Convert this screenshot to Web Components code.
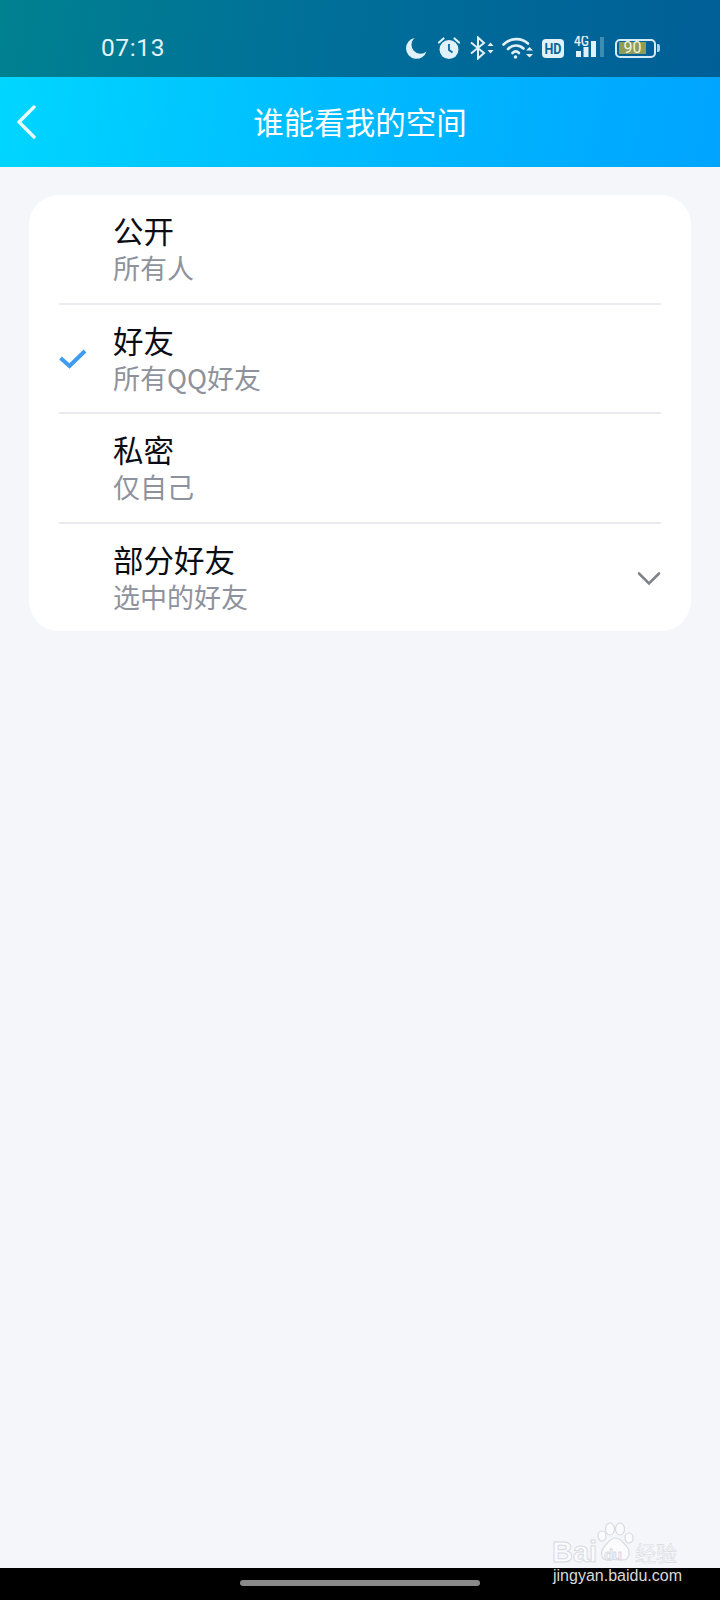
<!DOCTYPE html>
<html lang="zh">
<head>
<meta charset="utf-8">
<title>谁能看我的空间</title>
<style>
	html, body { margin: 0; padding: 0; }
	body {
		width: 720px;
		height: 1600px;
		position: relative;
		overflow: hidden;
		display: flex;
		flex-direction: column;
		background: #f4f6fa;
		font-family: Roboto, "Noto Sans CJK SC", sans-serif;
	}
</style>
</head>
<body>
<status-bar time="07:13" battery="90"></status-bar>
<app-header>谁能看我的空间</app-header>
<option-card>
	<option-row label="公开" hint="所有人"></option-row>
	<option-row label="好友" hint="所有QQ好友" checked></option-row>
	<option-row label="私密" hint="仅自己"></option-row>
	<option-row label="部分好友" hint="选中的好友" expandable></option-row>
</option-card>
<nav-bar></nav-bar>
<baidu-mark></baidu-mark>
<script>
class StatusBar extends HTMLElement {
	constructor() {
		super();
		this.attachShadow({ mode: 'open' });
		this.shadowRoot.innerHTML = `
		<style>
		:host {
			display: flex;
			flex: none;
			height: 77px;
			align-items: center;
			padding: 19px 60px 0 101px;
			box-sizing: border-box;
			background: linear-gradient(100deg, #008190 0%, #006f99 45%, #005f97 100%);
			color: #e4f3fa;
		}
		.time { font-size: 24.5px; line-height: 1; letter-spacing: .6px; }
		.icons { margin-left: auto; display: flex; align-items: center; }
		svg { display: block; flex: none; }
		.battery {
			display: flex;
			align-items: center;
			margin-left: 11px;
		}
		.shell {
			width: 41px;
			height: 19px;
			box-sizing: border-box;
			border: 2px solid #d6ecf6;
			border-radius: 5px;
			padding: 1.5px;
			display: flex;
		}
		.level {
			width: 82%;
			flex: none;
			background: #8f9b57;
			font-size: 16px;
			line-height: 12px;
			text-align: center;
			color: #eef3df;
		}
		.tip { width: 3px; height: 8px; background: #a9d3e6; border-radius: 0 2px 2px 0; margin-left: 1px; }
		</style>
		<span class="time">${this.getAttribute('time')}</span>
		<div class="icons">
			<svg width="22" height="22" viewBox="0 0 22 22" fill="#e1f1f9"><path d="M9.500 1A10.500 10.500 0 1 0 21.500 14.500 9 9 0 0 1 9.500 1Z"/></svg>
			<svg style="margin-left:10px" width="24" height="24" viewBox="0 0 24 24"><circle cx="12" cy="13.500" r="9.500" fill="#e1f1f9"/><path d="M12 8v6l3.500 2.500" fill="none" stroke="#0a6b97" stroke-width="1.800"/><path d="M2 6.500 6.500 2.500M22 6.500 17.500 2.500" stroke="#e1f1f9" stroke-width="2.200" stroke-linecap="round"/></svg>
			<svg style="margin-left:8px" width="26" height="24" viewBox="0 0 26 24" fill="none" stroke="#e1f1f9" stroke-width="2"><path d="M2 6.500 15 17 9 22.500V1.500L15 7 2 17.500"/><path d="M18.500 10l3-3.500 3 3.500zM18.500 14l3 3.500 3-3.500z" fill="#e1f1f9" stroke="none"/></svg>
			<svg style="margin-left:7px" width="32" height="24" viewBox="0 0 32 24" fill="none" stroke="#e1f1f9" stroke-width="2.600" stroke-linecap="round"><path d="M1.500 8.500C8.500 1.500 19.500 1.500 26 7.500"/><path d="M6 13c4.500-4.500 11-4.500 15.500-.5"/><path d="M10.500 17c2-2 4.500-2 6.500 0"/><circle cx="13.500" cy="21" r="1.800" fill="#e1f1f9" stroke="none"/><path d="M24 14.500l3.500-3.500 3.500 3.500zM24 18l3.500 3.500L31 18z" fill="#e1f1f9" stroke="none"/></svg>
			<svg style="margin-left:8px" width="22" height="19" viewBox="0 0 22 19"><rect width="22" height="19" rx="4" fill="#e1f1f9"/><text x="11" y="14.500" text-anchor="middle" font-family="Roboto, sans-serif" font-weight="700" font-size="14" textLength="17" lengthAdjust="spacingAndGlyphs" fill="#0a6597">HD</text></svg>
			<svg style="margin-left:10px" width="30" height="24" viewBox="0 0 30 24"><text x="0" y="10" font-family="Roboto, sans-serif" font-weight="500" font-size="14" textLength="15" lengthAdjust="spacingAndGlyphs" fill="#e1f1f9">4G</text><rect x="2" y="15" width="5" height="6" fill="#e1f1f9"/><rect x="9.500" y="11" width="5" height="10" fill="#e1f1f9"/><rect x="17" y="5" width="5" height="16" fill="#e1f1f9"/><rect x="26" y="1" width="4" height="20" fill="#3d8cb4"/></svg>
			<div class="battery">
				<div class="shell"><div class="level">${this.getAttribute('battery')}</div></div>
				<div class="tip"></div>
			</div>
		</div>`;
	}
}

class AppHeader extends HTMLElement {
	constructor() {
		super();
		this.attachShadow({ mode: 'open' });
		this.shadowRoot.innerHTML = `
		<style>
		:host {
			display: flex;
			flex: none;
			height: 90px;
			position: relative;
			align-items: center;
			justify-content: center;
			background: linear-gradient(100deg, #00d6ff 0%, #00bcff 45%, #00a4ff 100%);
			color: #fff;
			font-family: "Noto Sans CJK SC", sans-serif;
			font-size: 30.500px;
		}
		.back { position: absolute; left: 16px; top: 28px; display: block; }
		.title { line-height: 1; margin-top: -1px; }
		</style>
		<svg class="back" width="20" height="34" viewBox="0 0 20 34" fill="none" stroke="#e8fbff" stroke-width="3.400" stroke-linecap="round" stroke-linejoin="round"><path d="M18 2 3 17l15 15"/></svg>
		<span class="title"><slot></slot></span>`;
	}
}

class OptionCard extends HTMLElement {
	constructor() {
		super();
		this.attachShadow({ mode: 'open' });
		this.shadowRoot.innerHTML = `
		<style>
		:host {
			display: flex;
			flex-direction: column;
			flex: none;
			margin: 28px 29px 0;
			padding: 0 30px;
			height: 436px;
			background: #fff;
			border-radius: 30px;
		}
		</style>
		<slot></slot>`;
	}
}

class OptionRow extends HTMLElement {
	constructor() {
		super();
		this.attachShadow({ mode: 'open' });
		const check = this.hasAttribute('checked')
			? `<svg class="check" width="28" height="20" viewBox="0 0 28 20" fill="none" stroke="#3f9df0" stroke-width="4"><path d="M1.500 9 10.500 17 26 2"/></svg>`
			: '';
		const arrow = this.hasAttribute('expandable')
			? `<svg class="arrow" width="26" height="16" viewBox="0 0 26 16" fill="none" stroke="#80838c" stroke-width="2.600" stroke-linecap="round"><path d="M3 2.500 13 12.500 23 2.500"/></svg>`
			: '';
		this.shadowRoot.innerHTML = `
		<style>
		:host {
			display: block;
			flex: 1;
			position: relative;
			box-sizing: border-box;
			border-bottom: 2px solid #e9ebee;
			padding: 17px 0 0 54px;
			font-family: "Noto Sans CJK SC", sans-serif;
		}
		:host(:last-child) { border-bottom: 0; }
		.label { font-size: 30.500px; line-height: 36px; color: #0a0d14; }
		.hint { font-size: 27px; line-height: 37px; color: #8e929c; margin-top: 1px; }
		.check { position: absolute; left: 0; top: 44px; }
		.arrow { position: absolute; right: -1px; top: 47px; }
		</style>
		${check}
		<div class="label">${this.getAttribute('label')}</div>
		<div class="hint">${this.getAttribute('hint')}</div>
		${arrow}`;
	}
}

class NavBar extends HTMLElement {
	constructor() {
		super();
		this.attachShadow({ mode: 'open' });
		this.shadowRoot.innerHTML = `
		<style>
		:host {
			display: flex;
			flex: none;
			margin-top: auto;
			height: 32px;
			background: #000;
			justify-content: center;
			padding-top: 12px;
			box-sizing: border-box;
		}
		.pill { width: 240px; height: 6px; border-radius: 3px; background: #8a8a8a; }
		</style>
		<div class="pill"></div>`;
	}
}

class BaiduMark extends HTMLElement {
	constructor() {
		super();
		this.attachShadow({ mode: 'open' });
		this.shadowRoot.innerHTML = `
		<style>
		:host {
			position: absolute;
			left: 552px;
			top: 1520px;
			width: 130px;
			height: 66px;
			display: block;
		}
		.brand {
			position: absolute;
			font-family: "Liberation Sans", sans-serif;
			font-weight: 700;
			line-height: 1;
			color: #fbfbfd;
			-webkit-text-stroke: 1px #d9dae0;
		}
		.bai { left: 0; top: 18px; font-size: 29px; }
		.du { left: 52px; top: 27px; font-size: 15px; letter-spacing: -.3px; }
		.jing {
			left: 83px;
			top: 22px;
			font-family: "Noto Sans CJK SC", sans-serif;
			font-size: 21px;
			font-weight: 400;
			-webkit-text-stroke: .6px #d9dae0;
		}
		.paw { position: absolute; left: 45px; top: 2px; }
		.site {
			position: absolute;
			left: 1px;
			top: 48px;
			font-family: "Liberation Sans", sans-serif;
			font-size: 16px;
			line-height: 16px;
			white-space: nowrap;
			color: #d9d9d9;
		}
		</style>
		<svg class="paw" width="38" height="42" viewBox="0 0 38 42" fill="#fbfbfd" stroke="#d9dae0" stroke-width="1.200">
			<ellipse cx="13" cy="7" rx="4.500" ry="6"/>
			<ellipse cx="23" cy="7" rx="4.500" ry="6"/>
			<ellipse cx="5" cy="14" rx="4" ry="5"/>
			<ellipse cx="32" cy="16" rx="4" ry="5"/>
			<path d="M18 16c5 0 8 4 12 9 4 5 2 13-4 13-3 0-5-1-8-1s-5 2-9 1c-5-1-6-8-2-13 4-4 6-9 11-9Z"/>
		</svg>
		<div class="brand bai">Bai</div>
		<div class="brand du">du</div>
		<div class="brand jing">经验</div>
		<div class="site">jingyan.baidu.com</div>`;
	}
}

customElements.define('status-bar', StatusBar);
customElements.define('app-header', AppHeader);
customElements.define('option-card', OptionCard);
customElements.define('option-row', OptionRow);
customElements.define('nav-bar', NavBar);
customElements.define('baidu-mark', BaiduMark);
</script>
</body>
</html>
